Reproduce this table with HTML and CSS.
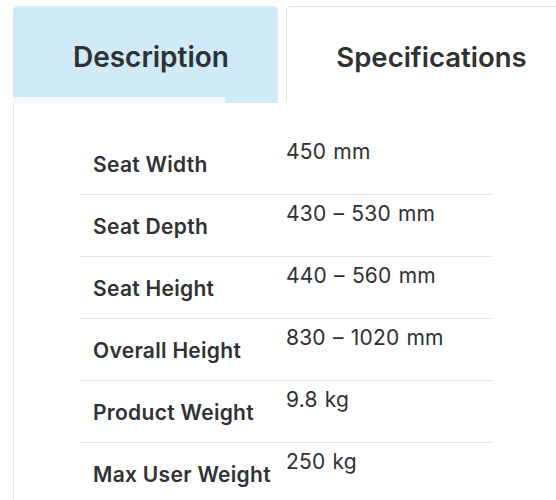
FILE: index.html
```html
<!DOCTYPE html>
<html>
<head>
<meta charset="utf-8">
<link rel="stylesheet" href="styles.css">
</head>
<body>
<div class="tabs">
  <div class="tab tab-desc">Description</div>
  <div class="tab tab-spec">Specifications</div>
</div>
<div class="panel">
  <div class="specs">
    <div class="row"><div class="label">Seat Width</div><div class="value">450 mm</div></div>
    <div class="row"><div class="label">Seat Depth</div><div class="value">430 – 530 mm</div></div>
    <div class="row"><div class="label">Seat Height</div><div class="value">440 – 560 mm</div></div>
    <div class="row"><div class="label">Overall Height</div><div class="value">830 – 1020 mm</div></div>
    <div class="row"><div class="label">Product Weight</div><div class="value">9.8 kg</div></div>
    <div class="row"><div class="label">Max User Weight</div><div class="value">250 kg</div></div>
  </div>
</div>
</body>
</html>
```
FILE: styles.css
```css
html, body {
  margin: 0;
  padding: 0;
  background: #ffffff;
  overflow: hidden;
}
body {
  font-family: "Inter", "DejaVu Sans", sans-serif;
  color: #2f3133;
  width: 556px;
  height: 500px;
}
.tabs {
  display: flex;
  padding-top: 6px;
  padding-left: 13px;
  gap: 8px;
}
.tab {
  height: 97px;
  display: flex;
  align-items: center;
  justify-content: center;
  font-size: 28px;
  font-weight: 600;
  box-sizing: border-box;
  padding-top: 4px;
}
.tab-desc {
  width: 275px;
  padding-left: 11px;
  border-radius: 5px 5px 0 0;
  background: linear-gradient(#f2f8fb, #f2f8fb) left bottom / 212px 6px no-repeat, #d0eaf8;
}
.tab-spec {
  width: 280px;
  padding-left: 20px;
  font-size: 27.5px;
  border: 1px solid #e0e0e0;
  border-right: none;
  border-bottom: none;
  border-radius: 5px 0 0 3px;
  background: #fff;
}
.panel {
  margin-left: 13px;
  border-left: 1px solid #e6e6e6;
  padding-top: 30px;
  padding-left: 66px;
  height: 397px;
  box-sizing: border-box;
}
.specs {
  width: 412px;
}
.row {
  display: grid;
  grid-template-columns: 206px 1fr;
  height: 62px;
  box-sizing: border-box;
  border-bottom: 1px solid #e3e3e3;
}
.row:last-child {
  border-bottom: none;
}
.label {
  padding-left: 13px;
  padding-top: 19px;
  font-size: 21px;
  font-weight: 600;
  line-height: 26px;
  letter-spacing: 0.3px;
  white-space: nowrap;
}
.value {
  padding-top: 6px;
  font-size: 21px;
  font-weight: 400;
  line-height: 26px;
  letter-spacing: 0.2px;
  word-spacing: 1px;
  white-space: nowrap;
}
```
